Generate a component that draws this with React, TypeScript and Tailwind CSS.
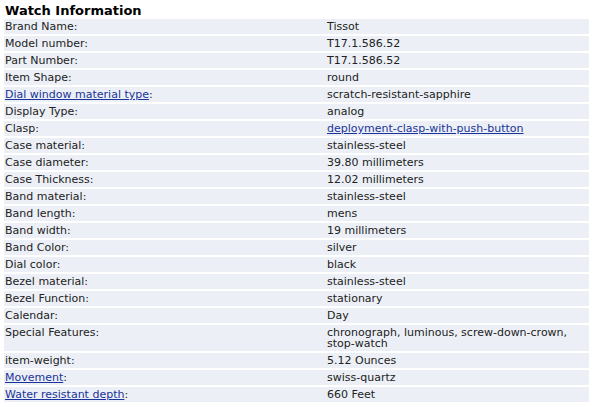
import React from "react";

interface Spec {
  label: string;
  value: string;
  labelLink?: boolean;
  valueLink?: boolean;
}

const SPECS: Spec[] = [
  { label: "Brand Name", value: "Tissot" },
  { label: "Model number", value: "T17.1.586.52" },
  { label: "Part Number", value: "T17.1.586.52" },
  { label: "Item Shape", value: "round" },
  { label: "Dial window material type", value: "scratch-resistant-sapphire", labelLink: true },
  { label: "Display Type", value: "analog" },
  { label: "Clasp", value: "deployment-clasp-with-push-button", valueLink: true },
  { label: "Case material", value: "stainless-steel" },
  { label: "Case diameter", value: "39.80 millimeters" },
  { label: "Case Thickness", value: "12.02 millimeters" },
  { label: "Band material", value: "stainless-steel" },
  { label: "Band length", value: "mens" },
  { label: "Band width", value: "19 millimeters" },
  { label: "Band Color", value: "silver" },
  { label: "Dial color", value: "black" },
  { label: "Bezel material", value: "stainless-steel" },
  { label: "Bezel Function", value: "stationary" },
  { label: "Calendar", value: "Day" },
  { label: "Special Features", value: "chronograph, luminous, screw-down-crown, stop-watch" },
  { label: "item-weight", value: "5.12 Ounces" },
  { label: "Movement", value: "swiss-quartz", labelLink: true },
  { label: "Water resistant depth", value: "660 Feet", labelLink: true },
];

export default function App() {
  return (
    <div className="bg-white w-[593px] h-[407px] overflow-hidden pl-[4px] pr-[4px] text-[#222] font-['DejaVu_Sans',Verdana,sans-serif]">
      <h2 className="text-[13px] leading-[15px] font-bold text-black pl-[1px] pt-[3px] h-[19px]">Watch Information</h2>
      <div className="flex flex-col gap-[2px] w-[585px]">
        {SPECS.map((s) => (
          <div key={s.label} className="flex bg-[#ecf0f6] text-[11px] leading-[11px] py-[2px]">
            <div className="w-[321px] pl-[1px]">
              {s.labelLink ? <a href="#" className="text-[#1a3399] underline">{s.label}</a> : s.label}:
            </div>
            <div className="flex-1 pl-[2px] pr-[2px]">
              {s.valueLink ? <a href="#" className="text-[#1a3399] underline">{s.value}</a> : s.value}
            </div>
          </div>
        ))}
      </div>
    </div>
  );
}
